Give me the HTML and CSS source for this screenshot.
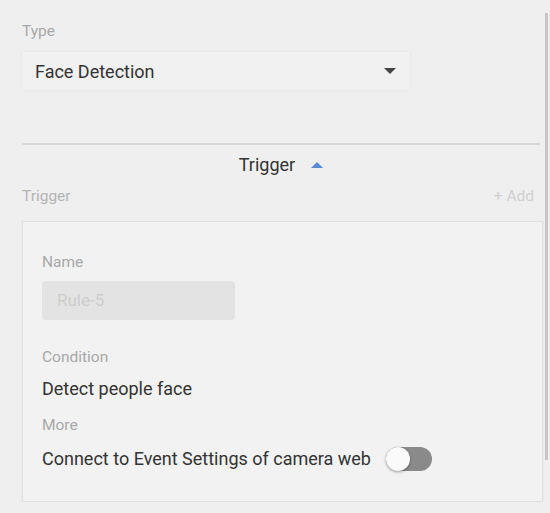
FILE: index.html
```html
<!DOCTYPE html>
<html lang="en">
<head>
  <meta charset="UTF-8">
  <title>Rule Settings</title>
  <link rel="stylesheet" href="styles.css">
</head>
<body>
  <div class="page">
    <div class="field-label">Type</div>
    <div class="select">
      <span>Face Detection</span>
      <span class="caret-down"></span>
    </div>

    <div class="section-head">
      <span>Trigger</span>
      <span class="caret-up"></span>
    </div>

    <div class="list-head">
      <span>Trigger</span>
      <span class="add">+ Add</span>
    </div>

    <div class="card">
      <div class="field-label">Name</div>
      <div class="text-input">Rule-5</div>

      <div class="field-label cond">Condition</div>
      <div class="value detect">Detect people face</div>

      <div class="field-label more">More</div>
      <div class="toggle-row">
        <span class="value">Connect to Event Settings of camera web</span>
        <span class="toggle"><span class="knob"></span></span>
      </div>
    </div>
  </div>
  <div class="scroll-thumb"></div>
</body>
</html>
```

FILE: styles.css
```css
body {
  margin: 0;
  background: #efefef;
  font-family: Roboto, "Liberation Sans", sans-serif;
  color: #333;
}

.page {
  padding: 20px 8px 0 22px;
}

.field-label {
  font-size: 15.5px;
  color: #a8a8a8;
  line-height: 22px;
}

.select {
  width: 361px;
  height: 38px;
  margin-top: 10px;
  padding: 0 14px 0 13px;
  display: flex;
  align-items: center;
  justify-content: space-between;
  background: #f1f1f1;
  box-shadow: 0 0 3px rgba(0,0,0,0.06);
  font-size: 18px;
}

.caret-down {
  width: 0;
  height: 0;
  border-left: 6px solid transparent;
  border-right: 6px solid transparent;
  border-top: 6px solid #444;
}

.section-head {
  margin-top: 53px;
  border-top: 2px solid #d8d8d8;
  padding-top: 8px;
  display: flex;
  justify-content: center;
  align-items: center;
  gap: 12px;
  font-size: 18px;
  line-height: 24px;
  margin-right: 2px;
}

.caret-up {
  width: 0;
  height: 0;
  border-left: 6px solid transparent;
  border-right: 6px solid transparent;
  border-bottom: 6px solid #5b8ad4;
  margin-left: 4px;
}

.list-head {
  display: flex;
  justify-content: space-between;
  margin-top: 8px;
  font-size: 15.5px;
  line-height: 22px;
  color: #b4b4b4;
}

.add {
  color: #d0d0d0;
  padding-right: 8px;
}

.card {
  margin-top: 14px;
  margin-right: -1px;
  background: #f2f2f2;
  border: 1px solid #e2e2e2;
  box-shadow: 0 1px 2px rgba(0,0,0,0.08);
  padding: 29px 19px 30px 19px;
}

.text-input {
  width: 178px;
  height: 39px;
  margin-top: 8px;
  padding-left: 15px;
  border-radius: 4px;
  background: #e3e3e3;
  color: #cdcdcd;
  font-size: 17px;
  line-height: 39px;
}

.cond {
  margin-top: 26px;
}

.value {
  font-size: 18px;
  line-height: 24px;
  color: #333;
}

.detect {
  margin-top: 9px;
}

.more {
  margin-top: 13px;
}

.toggle-row {
  display: flex;
  align-items: center;
  gap: 15px;
  margin-top: 11px;
}

.toggle {
  position: relative;
  width: 46px;
  height: 24px;
  border-radius: 12px;
  background: #8a8a8a;
}

.knob {
  position: absolute;
  left: 0;
  top: 0;
  width: 24px;
  height: 24px;
  border-radius: 50%;
  background: #fafafa;
  box-shadow: 0 1px 3px rgba(0,0,0,0.35);
}

.scroll-thumb {
  position: absolute;
  top: 13px;
  right: 2px;
  width: 3px;
  height: 447px;
  background: #c6c6c6;
}
```
